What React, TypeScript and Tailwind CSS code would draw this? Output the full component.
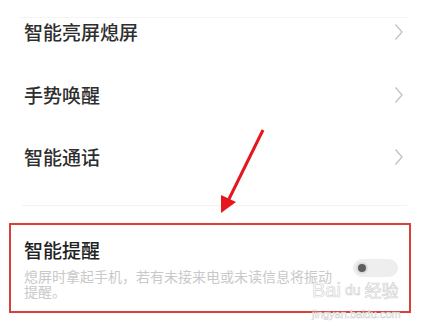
const rows = ['智能亮屏熄屏', '手势唤醒', '智能通话'];

const Chevron = () => (
  <svg width="9" height="18" viewBox="0 0 9 18" className="shrink-0">
    <polyline points="1.5,1.5 8,9 1.5,16.5" fill="none" stroke="#c4c4c4" strokeWidth="1.4" />
  </svg>
);

const Row = ({ label, className = '' }: { label: string; className?: string }) => (
  <div className={`flex h-[28px] items-center justify-between pl-[24px] pr-[26px] ${className}`}>
    <span className="text-[19px] leading-[28px] font-medium text-[#2e2e2e]">{label}</span>
    <Chevron />
  </div>
);

const App = () => {
  return (
    <div className="relative h-[327px] w-[429px] overflow-hidden bg-white font-['Noto_Sans_CJK_SC',sans-serif]">
      <div className="h-[17px]" />
      <div className="mx-[20px] h-px bg-[#f4f4f0]" />
      <Row label={rows[0]} />
      <Row label={rows[1]} className="mt-[35px]" />
      <Row label={rows[2]} className="mt-[34px]" />
      <div className="mx-[22px] mt-[34px] h-px bg-[#f2f2f2]" />

      <div className="mt-[17px] ml-[9px] flex h-[90px] w-[402px] items-center justify-between border-2 border-[#d8403a] pl-[13px] pr-[11px]">
        <div className="flex flex-col pb-[2px]">
          <span className="text-[19px] leading-[28px] font-medium text-[#222]">智能提醒</span>
          <p className="mt-[5px] w-[316px] text-[14px] leading-[15px] text-[#c9c9c9]">
            熄屏时拿起手机，若有未接来电或未读信息将振动提醒。
          </p>
        </div>
        <div className="flex h-[18px] w-[45px] items-center rounded-full bg-[#eeeeee] pl-[3px]">
          <div className="h-[12px] w-[12px] rounded-full border-2 border-[#dcdcdc] bg-[#5e5e5e]" />
        </div>
      </div>

      {/* red arrow annotation */}
      <svg className="absolute left-0 top-0" width="429" height="327" viewBox="0 0 429 327">
        <line x1="263" y1="130" x2="229" y2="199" stroke="#e5161d" strokeWidth="3" />
        <polygon points="221,195 236,202 221,213" fill="#e5161d" />
      </svg>

      {/* watermark */}
      <div className="pointer-events-none absolute left-[312px] top-[280px] flex flex-col items-start">
        <div className="flex items-center gap-[2px] font-['Liberation_Sans',sans-serif] text-[20px] leading-[20px] text-white [-webkit-text-stroke:0.7px_#d6d6d6]">
          <span>Bai</span>
          <span className="flex h-[18px] items-center rounded-full bg-white px-[2px] text-[14px] [-webkit-text-stroke:0.7px_#d6d6d6]">du</span>
          <span className="font-['Noto_Sans_CJK_SC',sans-serif] text-[17px]">经验</span>
        </div>
        <span className="mt-[9px] font-['Liberation_Sans',sans-serif] text-[11px] leading-[11px] text-white [-webkit-text-stroke:0.5px_#d0d0d0]">
          jingyan.baidu.com
        </span>
      </div>
    </div>
  );
};

export default App;
